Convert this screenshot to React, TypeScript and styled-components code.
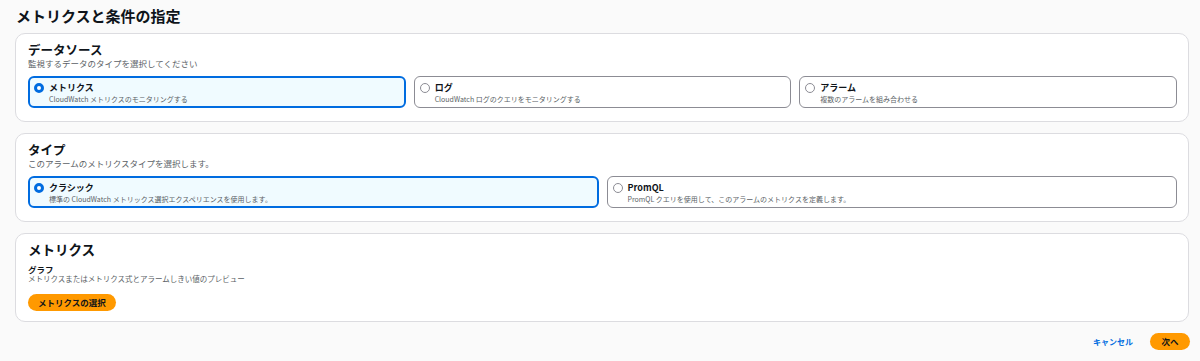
import styled, { createGlobalStyle } from 'styled-components';

const GlobalStyle = createGlobalStyle`
  html, body {
    margin: 0;
    padding: 0;
    background-color: #fafafa;
    font-family: 'Noto Sans CJK JP', 'Noto Sans', sans-serif;
    color: #0f141a;
  }
`;

const Page = styled.div`
  width: 1200px;
  height: 361px;
  box-sizing: border-box;
  padding: 6px 11px 0 15px;
  display: flex;
  flex-direction: column;
`;

const PageTitle = styled.h1`
  margin: 0 0 0 1px;
  font-size: 15px;
  line-height: 20px;
  font-weight: 700;
`;

const Card = styled.section`
  margin-top: 7px;
  background-color: #fff;
  border: 1px solid #dcdce0;
  border-radius: 10px;
  padding: 8px 11px 13px 12px;
`;

const CardSpaced = styled(Card)`
  margin-top: 11px;
`;

const CardTitle = styled.h2`
  margin: 0;
  font-size: 12.5px;
  line-height: 16px;
  font-weight: 700;
`;

const CardSub = styled.p`
  margin: 0 0 7px;
  font-size: 8.5px;
  line-height: 11px;
  color: #5b5f66;
`;

const TileRow = styled.div<{ $cols: number }>`
  display: grid;
  grid-template-columns: repeat(${(p) => p.$cols}, 1fr);
  gap: 8px;
`;

const Tile = styled.label<{ $checked?: boolean }>`
  box-sizing: border-box;
  height: 32px;
  display: flex;
  align-items: flex-start;
  gap: 5px;
  padding: ${(p) => (p.$checked ? '4px 8px 0 4px' : '5px 8px 0 5px')};
  border-radius: 6px;
  border: ${(p) => (p.$checked ? '2px solid #006ce0' : '1px solid #8c8c94')};
  background-color: ${(p) => (p.$checked ? '#f0fbff' : '#fff')};
`;

const Radio = styled.span<{ $checked?: boolean }>`
  flex: none;
  box-sizing: border-box;
  width: 10px;
  height: 10px;
  margin-top: 1px;
  border-radius: 50%;
  border: ${(p) => (p.$checked ? '3px solid #006ce0' : '1px solid #8c8c94')};
  background-color: #fff;
`;

const TileText = styled.div`
  display: flex;
  flex-direction: column;
`;

const TileLabel = styled.span`
  font-size: 9px;
  line-height: 12px;
  font-weight: 700;
  color: #0f141a;
`;

const TileDesc = styled.span`
  font-size: 7px;
  line-height: 10px;
  color: #5b5f66;
`;

const MetricsCard = styled(CardSpaced)`
  padding-bottom: 10px;
`;

const MetricsTitle = styled(CardTitle)`
  font-size: 13.5px;
  line-height: 14px;
  margin-bottom: 8px;
`;

const FieldLabel = styled.div`
  font-size: 8.5px;
  line-height: 10px;
  font-weight: 700;
`;

const FieldDesc = styled.div`
  font-size: 7.5px;
  line-height: 9px;
  color: #5b5f66;
  margin-bottom: 11px;
`;

const PrimaryButton = styled.button`
  box-sizing: border-box;
  height: 17px;
  padding: 0 10px;
  border: none;
  border-radius: 9px;
  background-color: #ff9900;
  color: #0f141a;
  font-family: inherit;
  font-size: 8.5px;
  font-weight: 700;
  line-height: 17px;
  align-self: flex-start;
  cursor: pointer;
`;

const MetricsBody = styled.div`
  display: flex;
  flex-direction: column;
`;

const Footer = styled.div`
  display: flex;
  justify-content: flex-end;
  align-items: center;
  gap: 17px;
  margin-top: 11px;
  margin-right: -1px;
`;

const LinkButton = styled.button`
  border: none;
  background: none;
  padding: 0;
  color: #006ce0;
  font-family: inherit;
  font-size: 8px;
  font-weight: 700;
  cursor: pointer;
`;

const NextButton = styled(PrimaryButton)`
  width: 40px;
  padding: 0;
`;

type Option = { label: string; desc: string; checked?: boolean };

const sources: Option[] = [
  { label: 'メトリクス', desc: 'CloudWatch メトリクスのモニタリングする', checked: true },
  { label: 'ログ', desc: 'CloudWatch ログのクエリをモニタリングする' },
  { label: 'アラーム', desc: '複数のアラームを組み合わせる' },
];

const types: Option[] = [
  { label: 'クラシック', desc: '標準の CloudWatch メトリックス選択エクスペリエンスを使用します。', checked: true },
  { label: 'PromQL', desc: 'PromQL クエリを使用して、このアラームのメトリクスを定義します。' },
];

function Tiles({ options }: { options: Option[] }) {
  return (
    <TileRow $cols={options.length}>
      {options.map((o) => (
        <Tile key={o.label} $checked={o.checked}>
          <Radio $checked={o.checked} />
          <TileText>
            <TileLabel>{o.label}</TileLabel>
            <TileDesc>{o.desc}</TileDesc>
          </TileText>
        </Tile>
      ))}
    </TileRow>
  );
}

export default function App() {
  return (
    <>
      <GlobalStyle />
      <Page>
        <PageTitle>メトリクスと条件の指定</PageTitle>
        <Card>
          <CardTitle>データソース</CardTitle>
          <CardSub>監視するデータのタイプを選択してください</CardSub>
          <Tiles options={sources} />
        </Card>
        <CardSpaced>
          <CardTitle>タイプ</CardTitle>
          <CardSub>このアラームのメトリクスタイプを選択します。</CardSub>
          <Tiles options={types} />
        </CardSpaced>
        <MetricsCard>
          <MetricsBody>
            <MetricsTitle>メトリクス</MetricsTitle>
            <FieldLabel>グラフ</FieldLabel>
            <FieldDesc>メトリクスまたはメトリクス式とアラームしきい値のプレビュー</FieldDesc>
            <PrimaryButton>メトリクスの選択</PrimaryButton>
          </MetricsBody>
        </MetricsCard>
        <Footer>
          <LinkButton>キャンセル</LinkButton>
          <NextButton>次へ</NextButton>
        </Footer>
      </Page>
    </>
  );
}
